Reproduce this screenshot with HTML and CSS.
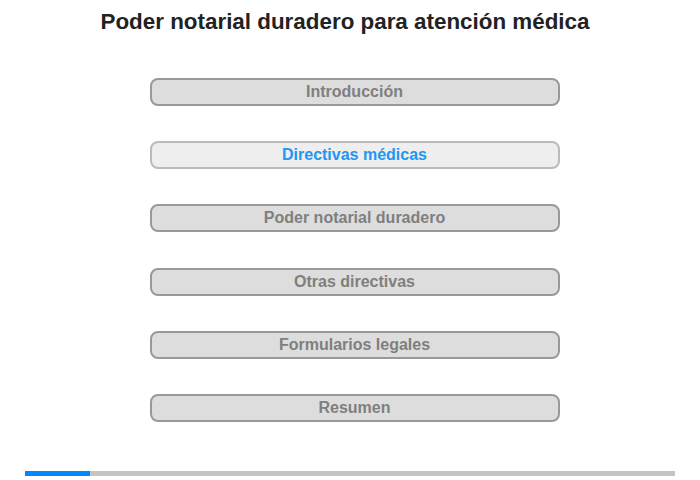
FILE: index.html
```html
<!DOCTYPE html>
<html lang="es">
<head>
<meta charset="utf-8">
<link rel="stylesheet" href="styles.css">
</head>
<body>
<div class="page">
  <h1 class="title">Poder notarial duradero para atención médica</h1>
  <nav class="menu">
    <div class="item">Introducción</div>
    <div class="item active">Directivas médicas</div>
    <div class="item">Poder notarial duradero</div>
    <div class="item">Otras directivas</div>
    <div class="item">Formularios legales</div>
    <div class="item">Resumen</div>
  </nav>
  <div class="progress"><div class="fill" style="width:10%"></div></div>
</div>
</body>
</html>
```
FILE: styles.css
```css
html, body { margin: 0; padding: 0; background: #fff; }
body { font-family: "Liberation Sans", Arial, sans-serif; }
.page { width: 700px; height: 480px; display: flex; flex-direction: column; align-items: center; }
.title { margin: 9px 10px 0 0; font-size: 22.4px; line-height: 26px; font-weight: bold; color: #222; text-align: center; }
.menu { margin: 43px 0 0 9px; display: flex; flex-direction: column; gap: 35.2px; }
.item { box-sizing: border-box; width: 410px; height: 28px; border: 2px solid #999; border-radius: 8px; background: #ddd; color: #7f7f7f; font-weight: bold; font-size: 16px; line-height: 24px; text-align: center; }
.item.active { background: #eee; border-color: #bbb; color: #2196f3; }
.progress { margin-top: 49px; width: 650px; height: 5px; background: #c4c4c4; }
.fill { height: 100%; background: #0088ff; }
```
